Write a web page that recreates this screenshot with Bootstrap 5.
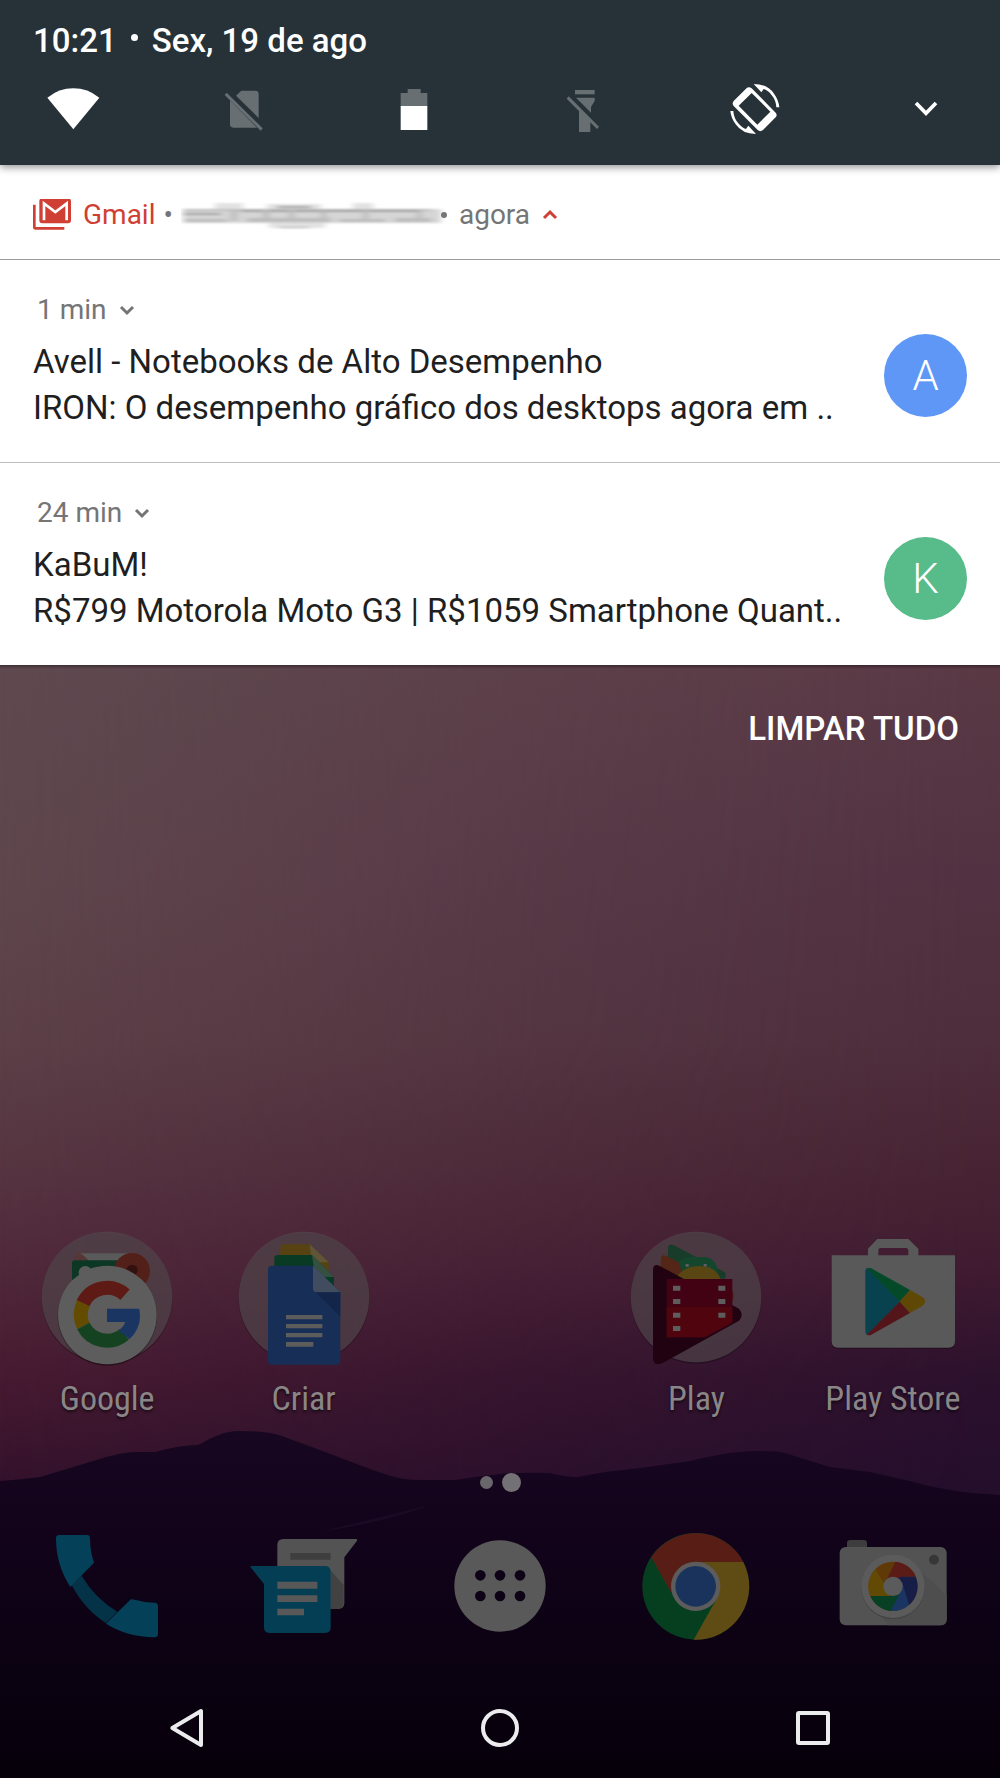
<!DOCTYPE html>
<html lang="pt-BR">
<head>
<meta charset="utf-8">
<meta name="viewport" content="width=device-width, initial-scale=1">
<title>Notificações</title>
<link href="https://cdn.jsdelivr.net/npm/bootstrap@5.3.0/dist/css/bootstrap.min.css" rel="stylesheet">
<style>
  body { font-family: Roboto, "Noto Sans", sans-serif; background: #0a0212; }
  .quick-bar { background: #263238; padding: 21px 34px 16px 33px; box-shadow: 0 2px 8px rgba(0,0,0,.45); z-index: 2; }
  .clock-line { font-size: 33px; line-height: 40px; font-weight: 500; gap: 14px; }
  .clock-dot { width: 7px; height: 7px; margin-bottom: 8px; }
  .quick-tile { width: 80px; height: 80px; }
  .quick-tile svg, .launcher svg, .soft-key svg { display: block; width: 100%; height: 100%; }
  .note-head { padding: 30px 33px 24px; border-bottom: 1px solid #9c9c9c; }
  .note-meta { font-size: 28px; line-height: 40px; color: #757575; }
  .gmail-red { color: #cf3f34; }
  .note-row { padding: 30px 33px 31px; color: #1f1f1f; }
  .note-row + .note-row { border-top: 1px solid #bdbdbd; }
  .note-text { font-size: 33px; line-height: 46px; margin-top: 9px; }
  .sender { width: 83px; height: 83px; margin-top: 44px; font-size: 42px; font-weight: 300; }
  .sender-a { background: #5e97f6; }
  .sender-k { background: #57bb8a; }
  .clear-all { font-size: 33px; line-height: 46px; font-weight: 500; }
  .clear-wrap { padding: 41px 41px 0; }
  .app-grid { padding: 0 9px; }
  .app-icon { width: 144px; height: 144px; }
  .dock-icon { width: 120px; height: 120px; }
  .dimmed { filter: brightness(.4); }
  .app-label { font-family: "Roboto Condensed", Roboto, sans-serif; font-size: 34px; line-height: 40px; margin-top: 9px; color: #8a8688; text-shadow: 0 2px 3px rgba(0,0,0,.6); }
  .page-dots { height: 20px; margin: 54px 0 34px; gap: 9px; }
  .page-dot { width: 13px; height: 13px; background: #6a676c; }
  .page-dot.active { width: 19px; height: 19px; background: #747176; }
  .soft-keys { padding: 58px 30px 26px; }
  .soft-key { width: 48px; height: 48px; }
</style>
</head>
<body class="d-flex flex-column min-vh-100">

<header class="quick-bar position-relative text-white">
  <div class="clock-line d-flex align-items-center"><span>10:21</span><span class="clock-dot rounded-circle bg-white"></span><span>Sex, 19 de ago</span></div>
  <div class="d-flex justify-content-between mt-2">
    <button type="button" class="btn p-0 border-0 quick-tile" aria-label="Wi-Fi">
      <svg viewBox="102 207 240 240"><path fill="#fff" d="M223 388 145 293Q180 265 223 265T301 293Z"/></svg>
    </button>
    <button type="button" class="btn p-0 border-0 quick-tile" aria-label="Sem chip">
      <svg viewBox="613 207 240 240"><g fill="#676f73"><path d="M709 287 725 272H767Q777 272 777 282V354Z"/><path d="M691 301 772 383H701Q691 383 691 373Z"/><path d="m681 278 108 107-6 7-108-107Z"/></g></svg>
    </button>
    <button type="button" class="btn p-0 border-0 quick-tile" aria-label="Bateria">
      <svg viewBox="1124 207 240 240"><path fill="#676f73" d="M1204 279H1225V267H1264V279H1284V320H1204Z"/><path fill="#fff" d="M1204 318H1284V390H1204Z"/></svg>
    </button>
    <button type="button" class="btn p-0 border-0 quick-tile" aria-label="Lanterna">
      <svg viewBox="135 207 240 240"><g fill="#676f73"><path d="M225 270H284V283H225Z"/><path d="M228 293H284V303L273 321V338Z"/><path d="M237 330 271 364V396H237Z"/><path d="m206 289 91 91-6 7-91-91Z"/></g></svg>
    </button>
    <button type="button" class="btn p-0 border-0 quick-tile" aria-label="Girar tela">
      <svg viewBox="646 207 240 240"><g fill="#fff"><path fill-rule="evenodd" d="M742 263Q749 259 756 265L828 338Q834 345 828 352L790 390Q782 397 774 390L702 318Q696 310 702 303ZM756 279 717 317 773 374 812 335Z"/><path d="M762 252Q803 252 823 281 837 300 839 322H830Q829 300 815 284 804 270 792 267L785 277Z"/><path d="M769 402Q728 402 708 373 694 354 692 333H701Q702 354 716 370 727 384 739 387L746 377Z"/></g></svg>
    </button>
    <button type="button" class="btn p-0 border-0 quick-tile" aria-label="Expandir">
      <svg viewBox="1155 207 240 240"><path fill="none" stroke="#fff" stroke-width="11" d="m1245 309 30 31 30-31"/></svg>
    </button>
  </div>
</header>

<section class="bg-white" aria-label="Notificações">
  <div class="note-head note-meta d-flex align-items-center">
    <svg width="38" height="32" viewBox="99 596 114 96" aria-hidden="true"><path fill="none" stroke="#cf3f34" stroke-width="8" d="M103 613V680Q103 684 107 684H193"/><rect x="118" y="594" width="95" height="75" rx="9" fill="#cf3f34"/><path fill="none" stroke="#fff" stroke-width="8" d="M132 660V609L166 635 200 609V660"/></svg>
    <span class="gmail-red ms-2 ps-1">Gmail</span>
    <span class="ms-2">•</span>
    <svg class="ms-2" width="266" height="34" viewBox="0 0 266 34" role="img" aria-label="Conta oculta">
      <defs><filter id="smear" x="-5%" y="-40%" width="110%" height="180%"><feGaussianBlur stdDeviation="3 1"/></filter></defs>
      <g filter="url(#smear)">
        <path fill="#d6d6d6" d="M2 11H260V25H2Z"/>
        <path fill="#bdbdbd" d="M2 11H250V13H2ZM4 21H46V24H4ZM66 20H150V24H66ZM158 21H204V24H158ZM214 20H250V24H214Z"/>
        <path fill="#e2e2e2" d="M34 5H62V11H34ZM86 6H140V11H86ZM88 25H144V30H88ZM172 5H192V11H172Z"/>
        <path fill="#a0a0a0" d="M2 15H40V17H2ZM96 8H130V10H96ZM98 29H128V30H98ZM60 12H240V14H60Z"/>
        <path fill="#bcbcbc" d="M50 13H56V23H50ZM82 12H88V24H82ZM108 12H113V24H108ZM140 13H145V24H140ZM182 11H187V23H182ZM236 13H241V23H236Z"/>
      </g>
      <circle cx="263" cy="17" r="3" fill="#757575"/>
    </svg>
    <span class="ms-2 ps-1">agora</span>
    <svg class="ms-2" width="24" height="24" viewBox="0 0 24 24" aria-hidden="true"><path fill="none" stroke="#cf3f34" stroke-width="3" d="m6 15 6-6 6 6"/></svg>
  </div>

  <article class="note-row d-flex">
    <div class="flex-grow-1">
      <div class="note-meta d-flex align-items-center"><span class="ps-1">1 min</span><svg class="ms-2" width="24" height="24" viewBox="0 0 24 24" aria-hidden="true"><path fill="none" stroke="#757575" stroke-width="3" d="m6 9 6 6 6-6"/></svg></div>
      <div class="note-text">Avell - Notebooks de Alto Desempenho<br>IRON: O desempenho gráfico dos desktops agora em ..</div>
    </div>
    <div class="sender sender-a rounded-circle text-white d-flex align-items-center justify-content-center flex-shrink-0">A</div>
  </article>

  <article class="note-row d-flex">
    <div class="flex-grow-1">
      <div class="note-meta d-flex align-items-center"><span class="ps-1">24 min</span><svg class="ms-2" width="24" height="24" viewBox="0 0 24 24" aria-hidden="true"><path fill="none" stroke="#757575" stroke-width="3" d="m6 9 6 6 6-6"/></svg></div>
      <div class="note-text">KaBuM!<br>R$799 Motorola Moto G3 | R$1059 Smartphone Quant..</div>
    </div>
    <div class="sender sender-k rounded-circle text-white d-flex align-items-center justify-content-center flex-shrink-0">K</div>
  </article>
</section>

<main class="position-relative flex-grow-1 d-flex flex-column">
  <svg class="position-absolute top-0 start-0 w-100 h-100" viewBox="0 665 1000 1113" preserveAspectRatio="none" aria-hidden="true">
    <defs>
      <linearGradient id="skyL" x1="0" y1="665" x2="0" y2="1500" gradientUnits="userSpaceOnUse">
        <stop offset="0" stop-color="#5f4a50"/><stop offset=".25" stop-color="#5f464d"/><stop offset=".45" stop-color="#5c4048"/><stop offset=".6" stop-color="#563541"/><stop offset=".72" stop-color="#50293b"/><stop offset=".85" stop-color="#471b31"/><stop offset="1" stop-color="#31102b"/>
      </linearGradient>
      <linearGradient id="skyR" x1="0" y1="665" x2="0" y2="1500" gradientUnits="userSpaceOnUse">
        <stop offset="0" stop-color="#5a3945"/><stop offset=".25" stop-color="#523142"/><stop offset=".45" stop-color="#4e2d3c"/><stop offset=".6" stop-color="#472433"/><stop offset=".72" stop-color="#401b31"/><stop offset=".85" stop-color="#2c112d"/><stop offset="1" stop-color="#230e2c"/>
      </linearGradient>
      <linearGradient id="fade" x1="0" y1="0" x2="1" y2="0"><stop offset="0" stop-color="#000"/><stop offset=".55" stop-color="#999"/><stop offset="1" stop-color="#fff"/></linearGradient>
      <mask id="toRight"><rect y="665" width="1000" height="1113" fill="url(#fade)"/></mask>
      <linearGradient id="hill" x1="0" y1="1430" x2="0" y2="1778" gradientUnits="userSpaceOnUse">
        <stop offset="0" stop-color="#170720"/><stop offset=".3" stop-color="#12031b"/><stop offset=".6" stop-color="#0c0213"/><stop offset="1" stop-color="#06000a"/>
      </linearGradient>
      <linearGradient id="edge" x1="0" y1="665" x2="0" y2="669" gradientUnits="userSpaceOnUse"><stop offset="0" stop-color="#000" stop-opacity=".35"/><stop offset="1" stop-color="#000" stop-opacity="0"/></linearGradient>
    </defs>
    <rect y="665" width="1000" height="1113" fill="url(#skyL)"/>
    <rect y="665" width="1000" height="1113" fill="url(#skyR)" mask="url(#toRight)"/>
    <rect y="665" width="1000" height="4" fill="url(#edge)"/>
    <path fill="url(#hill)" d="M0 1481Q25 1479 40 1477L80 1465Q120 1452 135 1452H155Q180 1445 198 1445C212 1438 222 1431 240 1431Q268 1431 282 1436L320 1450 370 1469Q400 1480 415 1480H455Q480 1476 500 1474T550 1473Q565 1477 578 1477L605 1472 640 1468 690 1461Q730 1451 755 1451T785 1453L830 1467 870 1472 910 1481Q950 1493 1000 1495V1778H0Z"/>
    <path fill="#1a0a24" d="M320 1532Q380 1517 430 1505 390 1521 320 1532Z"/>
  </svg>

  <div class="clear-wrap position-relative d-flex justify-content-end">
    <button type="button" class="btn p-0 border-0 text-white clear-all">LIMPAR TUDO</button>
  </div>

  <div class="position-relative mt-auto">
    <div class="app-grid d-flex">
      <a href="#" class="launcher col text-decoration-none d-flex flex-column align-items-center">
        <span class="app-icon dimmed">
          <svg viewBox="105 75 432 432"><circle cx="321" cy="294" r="197" fill="#000" opacity=".25"/><circle cx="321" cy="291" r="196" fill="#ebd2dc" opacity=".55"/><rect x="238" y="160" width="150" height="40" fill="#e0e0e0"/><path fill="#d88a84" d="M223 182 229 162Q238 157 246 163L268 182Z"/><rect x="216" y="181" width="150" height="70" rx="8" fill="#1e8a5a"/><circle cx="396" cy="213" r="54" fill="#d0503f"/><circle cx="396" cy="211" r="17" fill="#7d2a24"/><circle cx="256" cy="218" r="20" fill="#e8e8e8"/><circle cx="322" cy="348" r="149" fill="#000" opacity=".4"/><circle cx="322" cy="345" r="148" fill="#e9e9e9"/><g fill="none" stroke-width="42"><path stroke="#ea4335" d="M249 310A80 80 0 0 1 375 284"/><path stroke="#fbbc05" d="M250 378A80 80 0 0 1 250 310"/><path stroke="#34a853" d="M250 378A80 80 0 0 0 373 403"/></g><path fill="#4285f4" d="M321 326H418Q428 380 388 418L355 391Q370 382 376 366H321Z"/></svg>
        </span>
        <span class="app-label">Google</span>
      </a>
      <a href="#" class="launcher col text-decoration-none d-flex flex-column align-items-center">
        <span class="app-icon dimmed">
          <svg viewBox="695 75 432 432"><circle cx="911" cy="294" r="197" fill="#000" opacity=".25"/><circle cx="911" cy="291" r="196" fill="#ebd2dc" opacity=".55"/><path fill="#d9a52c" d="M850 133H928L985 187V230H840V143Q840 133 850 133Z"/><path fill="#f3d58a" d="M928 133 985 187H935Z"/><path fill="#16905a" d="M832 165H935L1001 231V270H822V175Q822 165 832 165Z"/><path fill="#84c8a0" d="M935 165 1001 231H945Z"/><path fill="#3a73d6" d="M815 197H938L1020 277V482Q1020 494 1008 494H815Q803 494 803 482V209Q803 197 815 197Z"/><path fill="#a3bfee" d="M938 197 1020 277H950Q938 277 938 265Z"/><path fill="#2f5fb8" d="M946 277H1020V350Z"/><path fill="#e6e6e6" d="M857 345H966V358H857ZM857 372H966V385H857ZM857 399H966V412H857ZM857 426H939V440H857Z"/></svg>
        </span>
        <span class="app-label">Criar</span>
      </a>
      <div class="col"></div>
      <a href="#" class="launcher col text-decoration-none d-flex flex-column align-items-center">
        <span class="app-icon dimmed">
          <svg viewBox="75 75 432 432"><circle cx="291" cy="294" r="197" fill="#000" opacity=".25"/><circle cx="291" cy="291" r="196" fill="#ebd2dc" opacity=".55"/><path fill="#3d9468" d="M207 145Q207 128 225 136L375 215Q384 222 378 236H207Z"/><path fill="#d2603a" d="M185 180Q185 160 203 168L300 220V260H185Z"/><path fill="#2fb070" d="M240 182Q260 170 285 171H320Q348 175 355 205V225H250Z"/><path fill="#f0f0f0" d="M260 192h9v8h-9zM314 192h9v8h-9zM326 203h8v7h-8z"/><path fill="#e0b02c" d="M230 237Q250 198 300 198T365 237Z"/><path fill="#c02f35" d="M390 262Q405 275 403 292L396 315Z"/><path fill="#52062a" d="M162 210Q162 190 181 197L420 326Q436 345 420 362L190 490Q164 500 162 476Z"/><path fill="#a8052f" d="M203 237H400V370L318 412H203Z"/><path fill="#c60a22" d="M203 322H400V365L318 412H203Z"/><path fill="#e8e8e8" d="M222 257h22v15h-22zM358 257h21v15h-21zM222 297h22v15h-22zM358 297h21v15h-21zM222 338h22v15h-22zM358 338h21v15h-21zM222 378h22v15h-22z"/></svg>
        </span>
        <span class="app-label">Play</span>
      </a>
      <a href="#" class="launcher col text-decoration-none d-flex flex-column align-items-center">
        <span class="app-icon dimmed">
          <svg viewBox="663 75 432 432"><path fill="#000" opacity=".35" d="M695 170H1065V430Q1065 446 1049 446H711Q695 446 695 430Z"/><path fill="#dedede" fill-rule="evenodd" d="M695 166H804V146L832 117H925L955 146V166H1065V424Q1065 443 1046 443H714Q695 443 695 424ZM835 166H925V151Q925 144 918 144H842Q835 144 835 151Z"/><path fill="#12a5c4" d="M796 212Q796 206 802 204L901 305 802 404Q796 402 796 396Z"/><path fill="#0bb866" d="M800 205Q806 201 814 205L930 270 900 305Z"/><path fill="#eeb50c" d="M930 270 968 292Q984 304 968 317L930 339 898 305Z"/><path fill="#cf3542" d="M800 404Q808 407 814 404L930 339 899 305Z"/></svg>
        </span>
        <span class="app-label">Play Store</span>
      </a>
    </div>

    <div class="page-dots d-flex justify-content-center align-items-center">
      <span class="page-dot rounded-circle"></span><span class="page-dot active rounded-circle"></span>
    </div>

    <div class="app-grid d-flex">
      <a href="#" class="launcher col d-flex justify-content-center" aria-label="Telefone"><span class="dock-icon dimmed">
        <svg viewBox="141 378 360 360"><path fill="#0a7dae" d="M215 555 245 527Q285 595 352 635L318 669Q255 630 215 555Z"/><path fill="#0aa0dc" d="M178 405H260Q270 405 270 415 270 455 282 488L211 561Q168 495 168 415 168 405 178 405Z"/><path fill="#0aa0dc" d="M397 598Q430 608 464 608 474 609 474 619V702Q474 712 464 712 380 710 318 671L388 602Q392 597 397 598Z"/></svg></span></a>
      <a href="#" class="launcher col d-flex justify-content-center" aria-label="Mensagens"><span class="dock-icon dimmed">
        <svg viewBox="731 378 360 360"><path fill="#d0d0d0" d="M849 417H1068Q1072 418 1070 422L1032 472V609Q1032 626 1015 626H831V435Q831 417 849 417Z"/><path fill="#9a9a9a" d="M870 459H991V479H870Z"/><path fill="#a6a6a6" d="M990 510 1030 555V609Q1030 626 1015 626H990Z"/><path fill="#0a9cd4" d="M753 498H974Q991 498 991 515V682Q991 699 974 699H808Q791 699 791 682V552L751 502Q749 498 753 498Z"/><path fill="#dcdcdc" d="M831 545H951V566H831ZM831 586H951V606H831ZM831 626H911V646H831Z"/></svg></span></a>
      <a href="#" class="launcher col d-flex justify-content-center" aria-label="Aplicativos"><span class="dock-icon dimmed">
        <svg viewBox="1320 378 360 360"><circle cx="1500" cy="558" r="137" fill="#dedede"/><g fill="#240838"><circle cx="1441" cy="526" r="16"/><circle cx="1500" cy="526" r="16"/><circle cx="1560" cy="526" r="16"/><circle cx="1441" cy="588" r="16"/><circle cx="1500" cy="588" r="16"/><circle cx="1560" cy="588" r="16"/></g></svg></span></a>
      <a href="#" class="launcher col d-flex justify-content-center" aria-label="Chrome"><span class="dock-icon dimmed">
        <svg viewBox="411 378 360 360"><circle cx="590" cy="559" r="160" fill="#0f9d50"/><path fill="#eebd34" d="M590 486H733A160 160 0 0 1 584 719L653 596Z"/><path fill="#db4835" d="M457 472A160 160 0 0 1 733 486H590L519 582Z"/><circle cx="590" cy="559" r="74" fill="#e6e6e6"/><circle cx="590" cy="559" r="61" fill="#3f7fe8"/></svg></span></a>
      <a href="#" class="launcher col d-flex justify-content-center" aria-label="Câmera"><span class="dock-icon dimmed">
        <svg viewBox="999 378 360 360"><path fill="#999" d="M1041 445V430Q1041 420 1051 420H1091Q1101 420 1101 430V445Z"/><rect x="1019" y="441" width="321" height="235" rx="18" fill="#d0d0d0"/><path fill="#c4c4c4" d="M1250 502 1340 585V658Q1340 676 1322 676H1165L1140 645Z"/><circle cx="1302" cy="479" r="15" fill="#8a8a8a"/><circle cx="1179" cy="563" r="95" fill="#a8a8a8"/><circle cx="1179" cy="559" r="95" fill="#e4e4e4"/><circle cx="1179" cy="559" r="74" fill="#ee8f12"/><path fill="#e4453a" d="M1186 485A74 74 0 0 1 1248 530H1204L1179 559 1160 540Z"/><path fill="#3848b0" d="M1200 530H1247A74 74 0 0 1 1227 615L1179 559Z"/><path fill="#4285f4" d="M1207 548 1227 615A74 74 0 0 1 1172 633L1179 559Z"/><path fill="#12a05a" d="M1172 633A74 74 0 0 1 1111 588H1160L1198 582Z"/><path fill="#f4b80c" d="M1111 588A74 74 0 0 1 1126 508L1152 550 1172 588Z"/><circle cx="1179" cy="559" r="29" fill="#e4e4e4"/></svg></span></a>
    </div>

    <nav class="soft-keys d-flex">
      <div class="col d-flex justify-content-center"><button type="button" class="btn p-0 border-0 soft-key" aria-label="Voltar"><svg viewBox="488 912 144 144"><path fill="none" stroke="#ececef" stroke-width="12" stroke-linejoin="round" d="M602 933V1035L516 984Z"/></svg></button></div>
      <div class="col d-flex justify-content-center"><button type="button" class="btn p-0 border-0 soft-key" aria-label="Início"><svg viewBox="1428 912 144 144"><circle cx="1500" cy="984" r="51" fill="none" stroke="#ececef" stroke-width="12"/></svg></button></div>
      <div class="col d-flex justify-content-center"><button type="button" class="btn p-0 border-0 soft-key" aria-label="Recentes"><svg viewBox="870 912 144 144"><rect x="897" y="939" width="90" height="90" rx="3" fill="none" stroke="#ececef" stroke-width="12" stroke-linejoin="round"/></svg></button></div>
    </nav>
  </div>
</main>

<script src="https://cdn.jsdelivr.net/npm/bootstrap@5.3.0/dist/js/bootstrap.bundle.min.js"></script>
</body>
</html>
